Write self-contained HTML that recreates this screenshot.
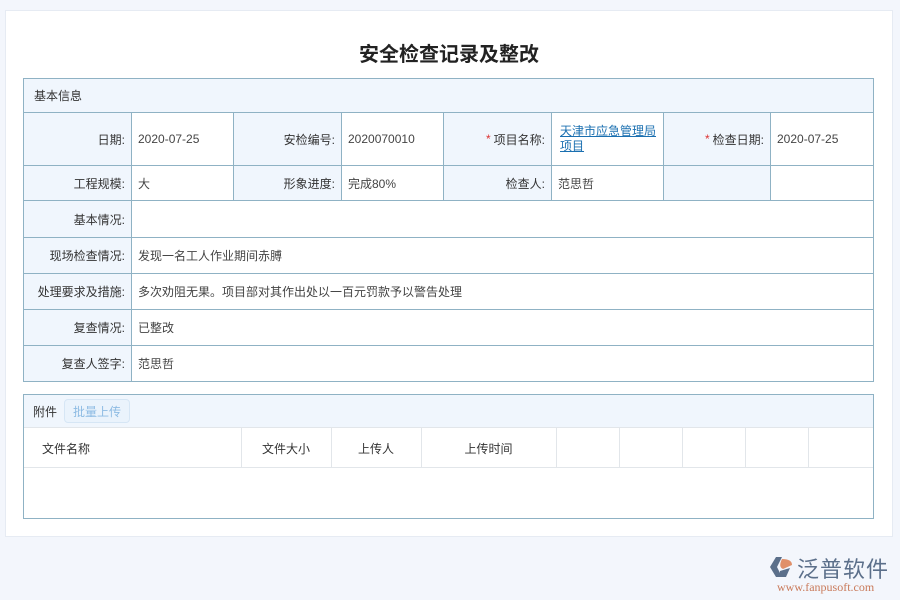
<!DOCTYPE html>
<html><head><meta charset="utf-8"><style>
*{margin:0;padding:0;box-sizing:border-box}
body{width:900px;height:600px;background:#f3f6fc;font-family:"Liberation Sans","Noto Sans CJK SC",sans-serif;font-size:12px;color:#333;position:relative;overflow:hidden}
.card{position:absolute;left:5px;top:10px;width:888px;height:527px;background:#fff;border:1px solid #e6ebf3}
h1{position:absolute;left:0;top:38px;width:898px;text-align:center;font-size:20px;font-weight:bold;color:#222}
.c{position:absolute;border:1px solid #8fb2c4;display:flex;align-items:center;padding:0 6px}
.l{background:#f0f6fd;justify-content:flex-end;color:#333}
.v{background:#fff;color:#444}
.s{color:#d33;margin-right:3px}
a{color:#1a6fb0;text-decoration:underline}
.th{position:absolute;display:flex;align-items:center;justify-content:center;border-right:1px solid #e2e6ea;height:40px;top:428px;color:#333}
</style></head><body>
<div class="card"></div>
<h1>安全检查记录及整改</h1>
<div class="c l" style="left:23px;top:78px;width:851px;height:35px;justify-content:flex-start;padding-left:10px">基本信息</div>

<div class="c l" style="left:23px;top:112px;width:109px;height:54px">日期:</div>
<div class="c v" style="left:131px;top:112px;width:103px;height:54px">2020-07-25</div>
<div class="c l" style="left:233px;top:112px;width:109px;height:54px">安检编号:</div>
<div class="c v" style="left:341px;top:112px;width:103px;height:54px">2020070010</div>
<div class="c l" style="left:443px;top:112px;width:109px;height:54px"><span class="s">*</span>项目名称:</div>
<div class="c v" style="left:551px;top:112px;width:113px;height:54px;padding-left:8px;line-height:15px"><a>天津市应急管理局项目</a></div>
<div class="c l" style="left:663px;top:112px;width:108px;height:54px"><span class="s">*</span>检查日期:</div>
<div class="c v" style="left:770px;top:112px;width:104px;height:54px">2020-07-25</div>

<div class="c l" style="left:23px;top:165px;width:109px;height:36px">工程规模:</div>
<div class="c v" style="left:131px;top:165px;width:103px;height:36px">大</div>
<div class="c l" style="left:233px;top:165px;width:109px;height:36px">形象进度:</div>
<div class="c v" style="left:341px;top:165px;width:103px;height:36px">完成80%</div>
<div class="c l" style="left:443px;top:165px;width:109px;height:36px">检查人:</div>
<div class="c v" style="left:551px;top:165px;width:113px;height:36px">范思哲</div>
<div class="c l" style="left:663px;top:165px;width:108px;height:36px"></div>
<div class="c v" style="left:770px;top:165px;width:104px;height:36px"></div>

<div class="c l" style="left:23px;top:200px;width:109px;height:38px">基本情况:</div>
<div class="c v" style="left:131px;top:200px;width:743px;height:38px"></div>
<div class="c l" style="left:23px;top:237px;width:109px;height:37px">现场检查情况:</div>
<div class="c v" style="left:131px;top:237px;width:743px;height:37px">发现一名工人作业期间赤膊</div>
<div class="c l" style="left:23px;top:273px;width:109px;height:37px">处理要求及措施:</div>
<div class="c v" style="left:131px;top:273px;width:743px;height:37px">多次劝阻无果。项目部对其作出处以一百元罚款予以警告处理</div>
<div class="c l" style="left:23px;top:309px;width:109px;height:37px">复查情况:</div>
<div class="c v" style="left:131px;top:309px;width:743px;height:37px">已整改</div>
<div class="c l" style="left:23px;top:345px;width:109px;height:37px">复查人签字:</div>
<div class="c v" style="left:131px;top:345px;width:743px;height:37px">范思哲</div>

<div style="position:absolute;left:23px;top:394px;width:851px;height:125px;border:1px solid #8fb2c4;background:#fff"></div>
<div style="position:absolute;left:24px;top:395px;width:849px;height:33px;background:#f0f6fd;border-bottom:1px solid #e2e6ea"></div>
<div style="position:absolute;left:33px;top:403px">附件</div>
<div style="position:absolute;left:64px;top:399px;width:66px;height:24px;border:1px solid #d6e6f5;border-radius:4px;background:#eaf3fc;color:#8dbbe3;display:flex;align-items:center;justify-content:center">批量上传</div>
<div class="th" style="left:24px;width:218px;justify-content:flex-start;padding-left:18px">文件名称</div>
<div class="th" style="left:241px;width:91px">文件大小</div>
<div class="th" style="left:331px;width:91px">上传人</div>
<div class="th" style="left:421px;width:136px">上传时间</div>
<div class="th" style="left:556px;width:64px"></div>
<div class="th" style="left:619px;width:64px"></div>
<div class="th" style="left:682px;width:64px"></div>
<div class="th" style="left:745px;width:64px"></div>
<div style="position:absolute;left:24px;top:467px;width:849px;border-top:1px solid #e2e6ea"></div>

<svg style="position:absolute;left:768px;top:555px" width="28" height="24" viewBox="0 0 28 24"><path d="M8 2 L2 12 L8 22 L14 22 L9 12 L14 2Z" fill="#5b6f8a"/><path d="M14 4 Q24 4 24 10 L15 14 Q10 12 14 4Z" fill="#e0906a"/><path d="M12 16 L22 13 L18 22 L12 22Z" fill="#5b6f8a"/></svg>
<div style="position:absolute;left:797px;top:552px;font-size:22px;color:#5b6f8a;letter-spacing:1px">泛普软件</div>
<div style="position:absolute;left:777px;top:580px;font-family:'Liberation Serif',serif;font-size:12px;color:#c97a5a">www.fanpusoft.com</div>
</body></html>
